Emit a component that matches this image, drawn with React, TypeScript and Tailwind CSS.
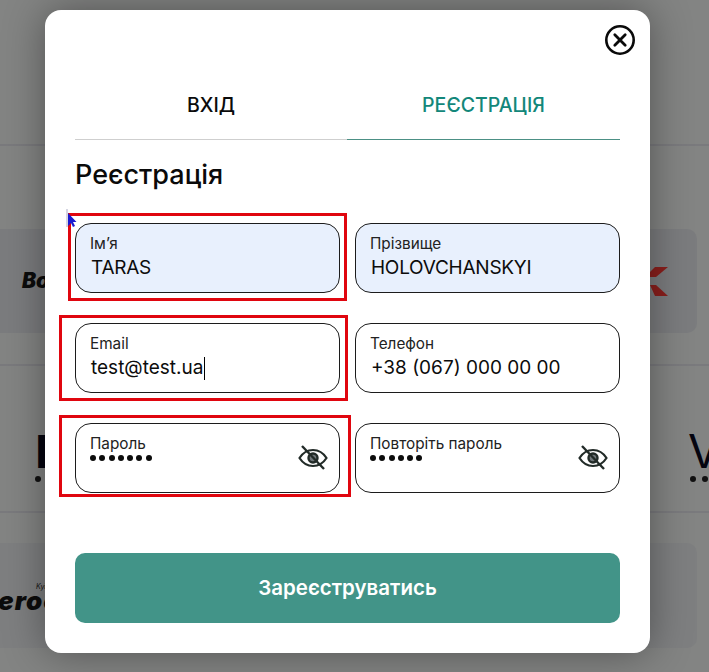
const font = "[font-family:Inter,'Noto_Sans',sans-serif]"

function EyeOff() {
  return (
    <svg width="30" height="28" viewBox="0 0 30 28" fill="none" stroke="#222b28" strokeWidth="2.2" className="shrink-0">
      <path d="M1.5 14 C5 8.5 9.5 6 15 6 C20.5 6 25 8.5 28.5 14 C25 19.5 20.5 22 15 22 C9.5 22 5 19.5 1.5 14 Z" />
      <circle cx="15" cy="14" r="4.5" fill="#70767a" strokeWidth="2.4" />
      <path d="M4 2 L26 25" strokeWidth="2.4" />
    </svg>
  )
}

function Field({
  label,
  value,
  filled,
  caret,
  dots,
  redBox,
}: {
  label: string
  value?: string
  filled?: boolean
  caret?: boolean
  dots?: number
  redBox?: string
}) {
  return (
    <div className="relative">
      {redBox && <div className={`absolute border-[3px] border-[#e0060f] ${redBox}`} />}
      <div
        className={`relative h-[70px] rounded-[16px] border border-[#1c1c1c] px-[14px] ${filled ? 'bg-[#e8f0fd]' : 'bg-white'}`}
      >
        <div className="mt-[11px] text-[15.3px] leading-[18px] text-[#222]">{label}</div>
        {value && (
          <div
            className={`mt-[2px] flex h-[26px] items-center pl-px text-[19px] leading-[26px] text-[#0c0c0c] ${filled ? 'tracking-[-0.25px]' : ''}`}
          >
            <span>{value}</span>
            {caret && <span className="ml-[1px] h-[23px] w-px bg-black" />}
          </div>
        )}
        {dots && (
          <div className="mt-[2px] flex gap-[3.3px]">
            {Array.from({ length: dots }).map((_, i) => (
              <span key={i} className="h-[6px] w-[6px] rounded-full bg-[#0c0c0c]" />
            ))}
          </div>
        )}
        {dots && (
          <div className="absolute top-[20px] right-[11px]">
            <EyeOff />
          </div>
        )}
      </div>
    </div>
  )
}

export default function App() {
  return (
    <div className={`relative h-[672px] w-[709px] overflow-hidden bg-[#838483] ${font}`}>
      {/* page behind the overlay */}
      <div className="h-[146px] border-b-2 border-[#7a7a7d]" />
      <div className="h-[220px] border-b-2 border-[#7a7a7d] pt-[83px] pr-[12px]">
        <div className="flex h-[104px] items-center justify-between rounded-r-[10px] bg-[#7b7c7e] pr-[29px] pl-[22px]">
          <span className="text-[21px] font-black text-[#0c0c0c] italic">Bosch</span>
          <svg width="23" height="30" viewBox="0 0 23 30" fill="#8a1f1c">
            <path d="M0 11 L10 1 L23 1 L11 11 Z" />
            <path d="M5 19 L11 19 L23 30 L10 30 Z" />
          </svg>
        </div>
      </div>
      <div className="flex h-[147px] items-start justify-between border-b-2 border-[#7a7a7d] pt-[62px] pl-[35px]">
        <div className="flex flex-col">
          <span className="ml-px text-[46px] leading-[46px] font-black text-[#050510]">F</span>
          <span className="mt-[2px] h-[6px] w-[6px] rounded-full bg-[#111]" />
        </div>
        <div className="flex w-[21px] flex-col">
          <span className="text-[46px] leading-[46px] text-[#050510]">V</span>
          <div className="mt-[2px] ml-[2px] flex gap-[6px]">
            <span className="h-[6px] w-[6px] rounded-full bg-[#111]" />
            <span className="h-[6px] w-[6px] rounded-full bg-[#111]" />
          </div>
        </div>
      </div>
      <div className="pt-[30px] pr-[12px]">
        <div className="flex h-[105px] flex-col rounded-r-[10px] bg-[#7e7f80] pt-[40px]">
          <span className="ml-[36px] text-[7px] leading-[8px] text-[#111] italic">Kyiv</span>
          <span className="ml-[-2px] text-[26px] leading-[20px] font-black tracking-[1px] text-[#0c0c0c] italic">eroc</span>
        </div>
      </div>

      {/* mouse pointer left on the screenshot */}
      <svg width="12" height="19" viewBox="0 0 12 19" className="absolute top-[209px] left-[66px] z-20">
        <rect x="0" y="0" width="2" height="18" fill="#d6d6e2" />
        <path d="M2 4 L2 17 L5 14 L7 18 L9 17 L7 13 L10.5 13 Z" fill="#1a1ad0" />
      </svg>

      {/* modal */}
      <div className="absolute top-[10px] left-[45px] z-10 flex h-[643px] w-[605px] flex-col rounded-[16px] bg-white px-[30px] shadow-[0_0_40px_rgba(0,0,0,0.38)]">
        <button className="absolute top-[15px] right-[15px]">
          <svg width="30" height="30" viewBox="0 0 30 30" fill="none" stroke="#0a0a0a" className="block">
            <circle cx="15" cy="15" r="13.7" strokeWidth="2.6" />
            <path d="M9.8 9.8 L20.2 20.2 M20.2 9.8 L9.8 20.2" strokeWidth="2.8" strokeLinecap="round" />
          </svg>
        </button>

        <div className="mt-[60px] grid grid-cols-[272px_1fr] text-center text-[19.5px] font-medium">
          <div className="h-[70px] border-b border-[#cfcfcf] pt-[23px] leading-[24px] text-[#0b0b0b]">ВХІД</div>
          <div className="h-[70px] border-b border-[#4c9085] pt-[23px] leading-[24px] text-[#13877a]">РЕЄСТРАЦІЯ</div>
        </div>

        <h2 className="mt-[18px] text-[27px] leading-[34px] font-medium text-[#0a0a0a]">Реєстрація</h2>

        <div className="mt-[31px] grid grid-cols-2 gap-x-[15px] gap-y-[30px]">
          <Field
            label="Ім’я"
            value="TARAS"
            filled
            redBox="top-[-10px] right-[-7px] bottom-[-8px] left-[-7px]"
          />
          <Field label="Прізвище" value="HOLOVCHANSKYI" filled />
          <Field
            label="Email"
            value="test@test.ua"
            caret
            redBox="top-[-8px] right-[-8px] bottom-[-8px] left-[-16px]"
          />
          <Field label="Телефон" value="+38 (067) 000 00 00" />
          <Field
            label="Пароль"
            dots={7}
            redBox="top-[-8px] right-[-11px] bottom-[-4px] left-[-16px]"
          />
          <Field label="Повторіть пароль" dots={6} />
        </div>

        <button className="mt-[60px] h-[70px] rounded-[10px] bg-[#429488] text-[20.5px] font-semibold text-white">
          Зареєструватись
        </button>
      </div>
    </div>
  )
}
